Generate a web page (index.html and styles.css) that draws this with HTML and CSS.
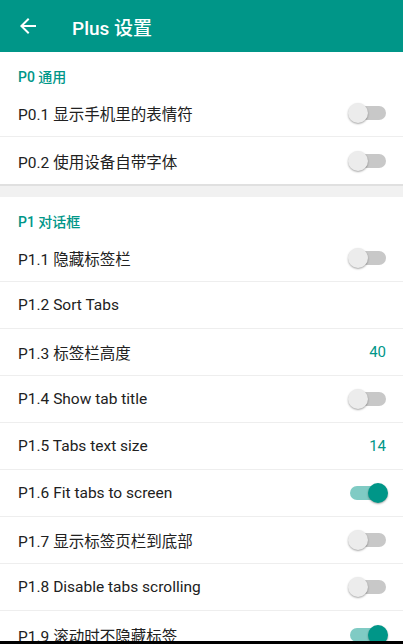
FILE: index.html
```html
<!DOCTYPE html>
<html lang="zh">
<head>
  <meta charset="UTF-8" />
  <meta name="viewport" content="width=device-width, initial-scale=1.0" />
  <title>Plus 设置</title>
  <link rel="stylesheet" href="styles.css">
</head>
<body>
  <header class="appbar">
    <svg class="back" width="24" height="24" viewBox="0 0 24 24">
      <path d="M20 11H7.83l5.59-5.59L12 4l-8 8 8 8 1.41-1.41L7.83 13H20v-2z" fill="#fff"/>
    </svg>
    <h1>Plus 设置</h1>
  </header>

  <section class="group">
    <div class="group-title">P0 通用</div>
    <div class="row"><span>P0.1 显示手机里的表情符</span><i class="switch"></i></div>
    <div class="row"><span>P0.2 使用设备自带字体</span><i class="switch"></i></div>
  </section>

  <div class="gap"></div>

  <section class="group">
    <div class="group-title">P1 对话框</div>
    <div class="row"><span>P1.1 隐藏标签栏</span><i class="switch"></i></div>
    <div class="row"><span>P1.2 Sort Tabs</span></div>
    <div class="row"><span>P1.3 标签栏高度</span><b class="value">40</b></div>
    <div class="row"><span>P1.4 Show tab title</span><i class="switch"></i></div>
    <div class="row"><span>P1.5 Tabs text size</span><b class="value">14</b></div>
    <div class="row"><span>P1.6 Fit tabs to screen</span><i class="switch on"></i></div>
    <div class="row"><span>P1.7 显示标签页栏到底部</span><i class="switch"></i></div>
    <div class="row"><span>P1.8 Disable tabs scrolling</span><i class="switch"></i></div>
    <div class="row"><span>P1.9 滚动时不隐藏标签</span><i class="switch on"></i></div>
  </section>

  <div class="navbar"></div>
</body>
</html>
```

FILE: styles.css
```css
* {
  margin: 0;
  padding: 0;
  box-sizing: border-box;
}

html, body {
  width: 100%;
  height: 100%;
  overflow: hidden;
  background: #fff;
  font-family: Roboto, "Noto Sans CJK SC", sans-serif;
}

.appbar {
  height: 52px;
  background: #009688;
  display: flex;
  align-items: center;
  padding-left: 16px;
}

.appbar .back {
  display: block;
}

.appbar h1 {
  color: #fff;
  font-size: 19px;
  font-weight: 500;
  margin-left: 32px;
}

.group-title {
  height: 38px;
  padding: 17px 0 0 18px;
  font-size: 14px;
  font-weight: 500;
  color: #009688;
  line-height: 16px;
}

.row {
  height: 47px;
  display: flex;
  align-items: center;
  justify-content: space-between;
  padding: 0 17px 0 18px;
  font-size: 15.5px;
  color: #212121;
  border-bottom: 1px solid #eeeeee;
}

.row:last-child {
  border-bottom: none;
}

.gap {
  height: 13px;
  background: #f1f1f1;
  border-top: 2px solid #e0e0e0;
}

.value {
  font-weight: 400;
  color: #009688;
  font-size: 15px;
}

.switch {
  position: relative;
  width: 36px;
  height: 14px;
  border-radius: 7px;
  background: #c8c8c8;
}

.switch::after {
  content: "";
  position: absolute;
  top: -3px;
  left: -2px;
  width: 20px;
  height: 20px;
  border-radius: 50%;
  background: #ececec;
  box-shadow: 0 1px 2px rgba(0,0,0,0.35);
}

.switch.on {
  background: #80cbc4;
}

.switch.on::after {
  left: 18px;
  background: #009688;
}

.navbar {
  position: fixed;
  left: 0;
  right: 0;
  bottom: 0;
  height: 3px;
  background: #000;
}
```
